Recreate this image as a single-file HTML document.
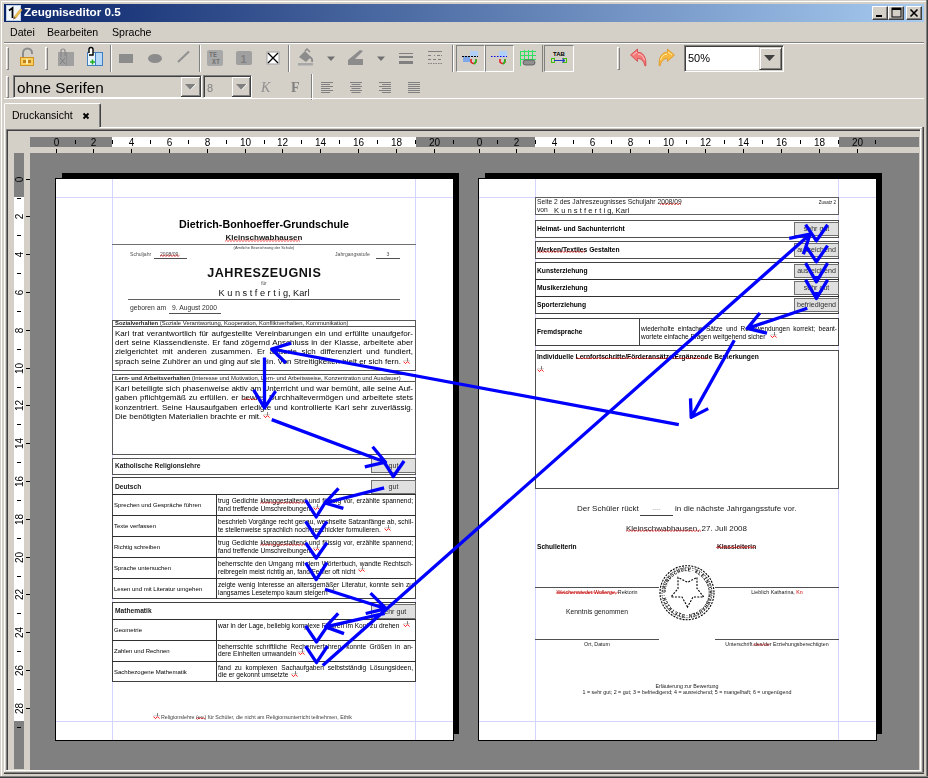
<!DOCTYPE html><html><head><meta charset="utf-8"><style>
html,body{margin:0;padding:0;}
body{width:928px;height:778px;overflow:hidden;position:relative;background:#d4d0c8;font-family:"Liberation Sans",sans-serif;}
div{position:absolute;box-sizing:border-box;}
.t{white-space:pre;will-change:transform;}
svg{position:absolute;}
</style></head><body>
<div style="left:0px;top:0px;width:928px;height:1px;background:#d4d0c8"></div>
<div style="left:1px;top:1px;width:926px;height:1px;background:#fff"></div>
<div style="left:1px;top:1px;width:1px;height:776px;background:#fff"></div>
<div style="left:926px;top:0px;width:1px;height:778px;background:#808080"></div>
<div style="left:927px;top:0px;width:1px;height:778px;background:#404040"></div>
<div style="left:0px;top:776px;width:928px;height:1px;background:#808080"></div>
<div style="left:0px;top:777px;width:928px;height:1px;background:#404040"></div>
<div style="left:4px;top:4px;width:920px;height:18px;background:linear-gradient(to right,#0a246a,#a6caf0)"></div>
<svg style="left:6px;top:5px" width="17" height="17" viewBox="0 0 17 17">
<rect x="0.5" y="0.5" width="14" height="15" fill="#f0f6fc" stroke="#c0d0e8" stroke-width="1"/>
<path d="M3 5.5 L6.5 3 V13" stroke="#000" stroke-width="1.8" fill="none"/>
<path d="M8 12 L14 4.5 Q15.5 3.5 16 5 L10 13 Z" fill="#f0c050" stroke="#d09830" stroke-width="0.6"/>
<path d="M7 14.5 L8 12 L10 13 Z" fill="#6a4010"/>
</svg>
<div class="t" style="left:24px;top:6.00px;font-size:11.7px;line-height:11.7px;color:#fff;font-weight:bold;">Zeugniseditor 0.5</div>
<div style="left:872px;top:6px;width:16px;height:14px;background:#d4d0c8;border-top:1px solid #fff;border-left:1px solid #fff;border-right:1px solid #404040;border-bottom:1px solid #404040;box-shadow:inset -1px -1px 0 #808080"></div>
<div style="left:888px;top:6px;width:16px;height:14px;background:#d4d0c8;border-top:1px solid #fff;border-left:1px solid #fff;border-right:1px solid #404040;border-bottom:1px solid #404040;box-shadow:inset -1px -1px 0 #808080"></div>
<div style="left:906px;top:6px;width:16px;height:14px;background:#d4d0c8;border-top:1px solid #fff;border-left:1px solid #fff;border-right:1px solid #404040;border-bottom:1px solid #404040;box-shadow:inset -1px -1px 0 #808080"></div>
<svg style="left:872px;top:6px" width="50" height="14" viewBox="0 0 50 14">
<rect x="4" y="9" width="6" height="2" fill="#000"/>
<rect x="20" y="2" width="9" height="9" fill="none" stroke="#000" stroke-width="1"/>
<rect x="20" y="2" width="9" height="2" fill="#000"/>
<path d="M38.5 3.5 L45.5 10.5 M45.5 3.5 L38.5 10.5" stroke="#000" stroke-width="1.6"/>
</svg>
<div class="t" style="left:10px;top:27.00px;font-size:10.6px;line-height:10.6px;color:#000">Datei</div>
<div class="t" style="left:46.5px;top:27.00px;font-size:10.6px;line-height:10.6px;color:#000">Bearbeiten</div>
<div class="t" style="left:112px;top:27.00px;font-size:10.6px;line-height:10.6px;color:#000">Sprache</div>
<div style="left:4px;top:42px;width:920px;height:1px;background:#808080"></div>
<div style="left:4px;top:43px;width:920px;height:1px;background:#fff"></div>
<div style="left:6px;top:47px;width:3px;height:23px;background:#d4d0c8;border-left:1px solid #fff;border-top:1px solid #fff;border-right:1px solid #808080;border-bottom:1px solid #808080"></div>
<div style="left:45px;top:47px;width:3px;height:23px;background:#d4d0c8;border-left:1px solid #fff;border-top:1px solid #fff;border-right:1px solid #808080;border-bottom:1px solid #808080"></div>
<div style="left:617px;top:47px;width:3px;height:23px;background:#d4d0c8;border-left:1px solid #fff;border-top:1px solid #fff;border-right:1px solid #808080;border-bottom:1px solid #808080"></div>
<div style="left:110px;top:45px;width:1px;height:27px;background:#808080"></div>
<div style="left:111px;top:45px;width:1px;height:27px;background:#fff"></div>
<div style="left:199px;top:45px;width:1px;height:27px;background:#808080"></div>
<div style="left:200px;top:45px;width:1px;height:27px;background:#fff"></div>
<div style="left:288px;top:45px;width:1px;height:27px;background:#808080"></div>
<div style="left:289px;top:45px;width:1px;height:27px;background:#fff"></div>
<div style="left:452px;top:45px;width:1px;height:27px;background:#808080"></div>
<div style="left:453px;top:45px;width:1px;height:27px;background:#fff"></div>
<svg style="left:0;top:44px" width="928" height="30" viewBox="0 44 928 30">
<!-- lock -->
<path d="M23 57 V53 A4.5 4.5 0 0 1 32 53 V54" stroke="#8c8c8c" stroke-width="2" fill="none"/>
<rect x="20.5" y="57.5" width="13" height="8" fill="#f8d060" stroke="#d09020"/>
<rect x="23" y="60" width="8" height="3" fill="#c08020"/>
<rect x="26" y="59" width="2" height="5" fill="#fff0b0"/>
<!-- clip gray -->
<rect x="58" y="52" width="16" height="14" fill="#a0a0a0"/>
<rect x="66" y="52" width="1" height="14" fill="#909090"/>
<path d="M60 58 L65 64 M65 58 L60 64" stroke="#808080" stroke-width="1"/>
<path d="M61 57 V51 A2 2 0 0 1 65 51 V56" stroke="#888" stroke-width="1.2" fill="none"/>
<!-- clip blue -->
<rect x="87.5" y="52.5" width="15" height="13" fill="#e8f4ff" stroke="#4080c0"/>
<rect x="95" y="53" width="1" height="12" fill="#4080c0"/>
<rect x="96" y="53" width="6" height="12" fill="#b8d8f8"/>
<path d="M89 53 V49.5 A2 2 0 0 1 93 49.5 V55 H89" stroke="#000" stroke-width="1.4" fill="#fff"/>
<path d="M90 62 H95 M92.5 59.5 V64.5" stroke="#20b020" stroke-width="1.6"/>
<!-- rect -->
<rect x="119" y="54" width="14" height="9" fill="#8c8c8c"/>
<ellipse cx="155" cy="58.5" rx="7" ry="4.5" fill="#8c8c8c"/>
<path d="M178 62 L189 51.5" stroke="#909090" stroke-width="2"/>
<!-- TEXT -->
<rect x="207" y="50" width="16" height="16" rx="2" fill="#a8a8a8"/>
<text x="209" y="57" font-family="Liberation Mono" font-size="6.5" font-weight="bold" fill="#707070">TE</text>
<text x="212" y="64" font-family="Liberation Mono" font-size="6.5" font-weight="bold" fill="#707070">XT</text>
<!-- 1 -->
<rect x="236" y="51" width="16" height="14" rx="2" fill="#a0a0a0"/>
<text x="240.5" y="63" font-family="Liberation Sans" font-size="11" font-weight="bold" fill="#808080">1</text>
<!-- X box -->
<rect x="267" y="52" width="12" height="12" fill="#fff" stroke="#a0a0a0"/>
<path d="M268 53 L278 63 M278 53 L268 63" stroke="#000" stroke-width="1.3"/>
<!-- bucket -->
<path d="M299 57 L305 51 L311 57 L306 62 Z" fill="#8c8c8c"/>
<path d="M305 51 L307 49 L310 52" stroke="#8c8c8c" stroke-width="1.5" fill="none"/>
<path d="M310 57 Q313 59 312 62" stroke="#8c8c8c" stroke-width="1.8" fill="none"/>
<rect x="298" y="63" width="15" height="2.5" fill="#a8a8a8"/>
<path d="M327 56.5 H335 L331 61 Z" fill="#707070"/>
<!-- pen -->
<path d="M348 60 L360 50 L363 51 L355 59 H363 V65 H348 Z" fill="#8c8c8c"/>
<path d="M377 56.5 H385 L381 61 Z" fill="#707070"/>
<!-- line thickness -->
<rect x="399" y="53" width="14" height="1" fill="#808080"/>
<rect x="399" y="56" width="14" height="2" fill="#808080"/>
<rect x="399" y="61" width="14" height="3" fill="#808080"/>
<!-- line style -->
<rect x="428" y="51" width="14" height="1" fill="#808080"/>
<path d="M428 55.5 H431 M434 55.5 H435 M437 55.5 H440 M441 55.5 H442" stroke="#808080"/>
<path d="M428 59.5 H431 M433 59.5 H436 M438 59.5 H441" stroke="#808080"/>
<path d="M428 63.5 H442" stroke="#808080" stroke-dasharray="1.5 1"/>
</svg>
<div style="left:456px;top:45px;width:29px;height:27px;background:#d4d0c8;border-top:1px solid #808080;border-left:1px solid #808080;border-right:1px solid #fff;border-bottom:1px solid #fff"></div>
<div style="left:485px;top:45px;width:29px;height:27px;background:#d4d0c8;border-top:1px solid #808080;border-left:1px solid #808080;border-right:1px solid #fff;border-bottom:1px solid #fff"></div>
<div style="left:544px;top:45px;width:30px;height:27px;background:#d4d0c8;border-top:1px solid #808080;border-left:1px solid #808080;border-right:1px solid #fff;border-bottom:1px solid #fff"></div>
<div style="left:542px;top:45px;width:1px;height:27px;background:#808080"></div>
<svg style="left:0;top:44px" width="928" height="30" viewBox="0 44 928 30">
<!-- magnet 1 -->
<rect x="470" y="51" width="8" height="6" fill="#b0d0f8"/>
<rect x="463" y="56" width="7" height="6" fill="#80a8e8"/>
<path d="M462 56.5 H478" stroke="#000" stroke-dasharray="2 1"/>
<path d="M471 59 V62 Q473.5 65 476 62 V59" stroke="#e02020" stroke-width="1.6" fill="none"/>
<path d="M474 64 Q476 63 476 59" stroke="#20c020" stroke-width="1.6" fill="none"/>
<!-- magnet 2 -->
<rect x="499" y="51" width="8" height="6" fill="#b0d0f8"/>
<path d="M491 56.5 H507" stroke="#0000e0" stroke-dasharray="1.5 1.5"/>
<path d="M500 59 V62 Q502.5 65 505 62 V59" stroke="#e02020" stroke-width="1.6" fill="none"/>
<path d="M503 64 Q505 63 505 59" stroke="#20c020" stroke-width="1.6" fill="none"/>
<!-- grid -->
<path d="M520.5 51 V66 M524.5 50 V64 M528.5 50 V62 M532.5 50 V62 M520 51.5 H536 M520 55.5 H536 M520 59.5 H536" stroke="#30e060" stroke-width="1"/>
<rect x="523" y="60" width="12" height="5" rx="2.5" fill="#909090" stroke="#505050" stroke-width="0.8"/>
<!-- TAB -->
<text x="553" y="56" font-family="Liberation Sans" font-size="6" font-weight="bold" fill="#000">TAB</text>
<rect x="551.5" y="58.5" width="3" height="4" fill="none" stroke="#40c000"/>
<rect x="563.5" y="58.5" width="3" height="4" fill="none" stroke="#40c000"/>
<path d="M554 60.5 H564" stroke="#2040c0" stroke-width="1"/>
<path d="M562 58.5 L565 60.5 L562 62.5" stroke="#2040c0" fill="none"/>
<!-- undo -->
<path d="M630.5 55 L637.5 49 V52 Q646.5 52.5 646 65.5 L645 66 Q643 58 637.5 58.5 V61.5 Z" fill="#f47a7a" stroke="#d03838" stroke-width="0.7"/>
<path d="M633 55 L637 52 M638 54 Q643 54.5 644.5 60" stroke="#ffd0d0" stroke-width="0.9" fill="none"/>
<!-- redo -->
<path d="M674.5 55 L667.5 49 V52 Q658.5 52.5 659 65.5 L660 66 Q662 58 667.5 58.5 V61.5 Z" fill="#f8b840" stroke="#d89020" stroke-width="0.7"/>
<path d="M672 55 L668 52 M667 54 Q662 54.5 660.5 60" stroke="#fff0b0" stroke-width="0.9" fill="none"/>
</svg>
<div style="left:684px;top:45px;width:100px;height:27px;background:#fff;border-top:1px solid #808080;border-left:1px solid #808080;border-right:1px solid #fff;border-bottom:1px solid #fff;box-shadow:inset 1px 1px 0 #404040, inset -1px -1px 0 #d4d0c8"></div>
<div style="left:759px;top:47px;width:23px;height:23px;background:#d4d0c8;border-top:1px solid #d4d0c8;border-left:1px solid #d4d0c8;border-right:1px solid #404040;border-bottom:1px solid #404040;box-shadow:inset 1px 1px 0 #fff, inset -1px -1px 0 #808080"></div>
<svg style="left:759px;top:47px" width="23" height="23"><path d="M5 8 H16 L10.5 14 Z" fill="#404040"/></svg>
<div class="t" style="left:687.5px;top:53.00px;font-size:11px;line-height:11px;color:#000">50%</div>
<div style="left:6px;top:76px;width:3px;height:22px;background:#d4d0c8;border-left:1px solid #fff;border-top:1px solid #fff;border-right:1px solid #808080;border-bottom:1px solid #808080"></div>
<div style="left:13px;top:75px;width:189px;height:23px;background:#d4d0c8;border-top:1px solid #808080;border-left:1px solid #808080;border-right:1px solid #fff;border-bottom:1px solid #fff;box-shadow:inset 1px 1px 0 #404040, inset -1px -1px 0 #d4d0c8"></div>
<div style="left:181px;top:77px;width:20px;height:20px;background:#d4d0c8;border-right:1px solid #404040;border-bottom:1px solid #404040;box-shadow:inset 1px 1px 0 #fff, inset -1px -1px 0 #808080"></div>
<svg style="left:181px;top:77px" width="20" height="20"><path d="M4 7 H15 L9.5 13 Z" fill="#808080"/><path d="M15 7 L9.5 13" stroke="#fff" stroke-width="1"/></svg>
<div class="t" style="left:17px;top:80.00px;font-size:15.3px;line-height:15.3px;color:#000">ohne Serifen</div>
<div style="left:203px;top:75px;width:49px;height:23px;background:#d4d0c8;border-top:1px solid #808080;border-left:1px solid #808080;border-right:1px solid #fff;border-bottom:1px solid #fff;box-shadow:inset 1px 1px 0 #404040, inset -1px -1px 0 #d4d0c8"></div>
<div style="left:232px;top:77px;width:19px;height:20px;background:#d4d0c8;border-right:1px solid #404040;border-bottom:1px solid #404040;box-shadow:inset 1px 1px 0 #fff, inset -1px -1px 0 #808080"></div>
<svg style="left:232px;top:77px" width="19" height="20"><path d="M4 7 H15 L9.5 13 Z" fill="#808080"/><path d="M15 7 L9.5 13" stroke="#fff" stroke-width="1"/></svg>
<div class="t" style="left:206.5px;top:83.00px;font-size:11px;line-height:11px;color:#808080">8</div>
<div class="t" style="left:261px;top:81.00px;font-size:14px;line-height:14px;color:#909090;font-family:'Liberation Serif';font-style:italic">K</div>
<div class="t" style="left:290.5px;top:81.00px;font-size:14px;line-height:14px;color:#808080;font-family:'Liberation Serif';font-weight:bold">F</div>
<div style="left:311px;top:74px;width:1px;height:26px;background:#808080"></div>
<div style="left:312px;top:74px;width:1px;height:26px;background:#fff"></div>
<svg style="left:0;top:78px" width="928" height="20" viewBox="0 78 928 20">
<g fill="#808080">
<rect x="321" y="82" width="12" height="1"/><rect x="321" y="84" width="9" height="1"/><rect x="321" y="86" width="12" height="1"/><rect x="321" y="88" width="9" height="1"/><rect x="321" y="90" width="12" height="1"/><rect x="321" y="92" width="9" height="1"/>
<rect x="350" y="82" width="12" height="1"/><rect x="351.5" y="84" width="9" height="1"/><rect x="350" y="86" width="12" height="1"/><rect x="351.5" y="88" width="9" height="1"/><rect x="350" y="90" width="12" height="1"/><rect x="351.5" y="92" width="9" height="1"/>
<rect x="379" y="82" width="12" height="1"/><rect x="382" y="84" width="9" height="1"/><rect x="379" y="86" width="12" height="1"/><rect x="382" y="88" width="9" height="1"/><rect x="379" y="90" width="12" height="1"/><rect x="382" y="92" width="9" height="1"/>
<rect x="408" y="82" width="12" height="1"/><rect x="408" y="84" width="12" height="1"/><rect x="408" y="86" width="12" height="1"/><rect x="408" y="88" width="12" height="1"/><rect x="408" y="90" width="12" height="1"/><rect x="408" y="92" width="12" height="1"/>
</g></svg>
<div style="left:4px;top:98px;width:920px;height:1px;background:#fff"></div>
<div style="left:4px;top:103px;width:97px;height:24px;background:#d4d0c8;border-top:1px solid #fff;border-left:1px solid #fff;border-right:1px solid #404040;box-shadow:inset -1px 0 0 #808080;border-top-left-radius:2px;border-top-right-radius:2px"></div>
<div class="t" style="left:11.5px;top:110.00px;font-size:10.5px;line-height:10.5px;color:#000">Druckansicht</div>
<svg style="left:82px;top:112px" width="9" height="8"><path d="M1.5 1.5 L6.5 6.5 M6.5 1.5 L1.5 6.5" stroke="#000" stroke-width="1.8"/></svg>
<div style="left:100px;top:127px;width:824px;height:1px;background:#fff"></div>
<div style="left:4px;top:127px;width:1px;height:647px;background:#fff"></div>
<div style="left:922px;top:127px;width:1px;height:647px;background:#808080"></div>
<div style="left:923px;top:127px;width:1px;height:647px;background:#404040"></div>
<div style="left:4px;top:772px;width:920px;height:1px;background:#808080"></div>
<div style="left:4px;top:773px;width:920px;height:1px;background:#404040"></div>
<div style="left:6px;top:129px;width:915px;height:1px;background:#808080"></div>
<div style="left:6px;top:129px;width:1px;height:642px;background:#808080"></div>
<div style="left:7px;top:130px;width:913px;height:1px;background:#404040"></div>
<div style="left:7px;top:130px;width:1px;height:640px;background:#404040"></div>
<div style="left:6px;top:770px;width:915px;height:1px;background:#fff"></div>
<div style="left:920px;top:129px;width:1px;height:642px;background:#fff"></div>
<div style="left:30px;top:137px;width:889px;height:10px;background:#808080"></div>
<div style="left:112px;top:137px;width:304px;height:10px;background:#fff"></div>
<div style="left:535px;top:137px;width:304px;height:10px;background:#fff"></div>
<div style="left:14px;top:153px;width:10px;height:616px;background:#808080"></div>
<div style="left:14px;top:197px;width:10px;height:524px;background:#fff"></div>
<div style="left:30px;top:153px;width:889px;height:617px;background:#808080"></div>
<svg style="left:0;top:0" width="928" height="778" viewBox="0 0 928 778"><rect x="56" y="149" width="1" height="4" fill="#000"/><text x="56.5" y="146" font-family="Liberation Sans" font-size="10" text-anchor="middle" fill="#000">0</text><rect x="75" y="140" width="1" height="4" fill="#000"/><rect x="93" y="149" width="1" height="4" fill="#000"/><text x="93.5" y="146" font-family="Liberation Sans" font-size="10" text-anchor="middle" fill="#000">2</text><rect x="112" y="140" width="1" height="4" fill="#000"/><rect x="131" y="149" width="1" height="4" fill="#000"/><text x="131.5" y="146" font-family="Liberation Sans" font-size="10" text-anchor="middle" fill="#000">4</text><rect x="150" y="140" width="1" height="4" fill="#000"/><rect x="169" y="149" width="1" height="4" fill="#000"/><text x="169.5" y="146" font-family="Liberation Sans" font-size="10" text-anchor="middle" fill="#000">6</text><rect x="188" y="140" width="1" height="4" fill="#000"/><rect x="207" y="149" width="1" height="4" fill="#000"/><text x="207.5" y="146" font-family="Liberation Sans" font-size="10" text-anchor="middle" fill="#000">8</text><rect x="226" y="140" width="1" height="4" fill="#000"/><rect x="245" y="149" width="1" height="4" fill="#000"/><text x="245.5" y="146" font-family="Liberation Sans" font-size="10" text-anchor="middle" fill="#000">10</text><rect x="264" y="140" width="1" height="4" fill="#000"/><rect x="282" y="149" width="1" height="4" fill="#000"/><text x="282.5" y="146" font-family="Liberation Sans" font-size="10" text-anchor="middle" fill="#000">12</text><rect x="301" y="140" width="1" height="4" fill="#000"/><rect x="320" y="149" width="1" height="4" fill="#000"/><text x="320.5" y="146" font-family="Liberation Sans" font-size="10" text-anchor="middle" fill="#000">14</text><rect x="339" y="140" width="1" height="4" fill="#000"/><rect x="358" y="149" width="1" height="4" fill="#000"/><text x="358.5" y="146" font-family="Liberation Sans" font-size="10" text-anchor="middle" fill="#000">16</text><rect x="377" y="140" width="1" height="4" fill="#000"/><rect x="396" y="149" width="1" height="4" fill="#000"/><text x="396.5" y="146" font-family="Liberation Sans" font-size="10" text-anchor="middle" fill="#000">18</text><rect x="415" y="140" width="1" height="4" fill="#000"/><rect x="434" y="149" width="1" height="4" fill="#000"/><text x="434.5" y="146" font-family="Liberation Sans" font-size="10" text-anchor="middle" fill="#000">20</text><rect x="453" y="140" width="1" height="4" fill="#000"/><rect x="479" y="149" width="1" height="4" fill="#000"/><text x="479.5" y="146" font-family="Liberation Sans" font-size="10" text-anchor="middle" fill="#000">0</text><rect x="497" y="140" width="1" height="4" fill="#000"/><rect x="516" y="149" width="1" height="4" fill="#000"/><text x="516.5" y="146" font-family="Liberation Sans" font-size="10" text-anchor="middle" fill="#000">2</text><rect x="535" y="140" width="1" height="4" fill="#000"/><rect x="554" y="149" width="1" height="4" fill="#000"/><text x="554.5" y="146" font-family="Liberation Sans" font-size="10" text-anchor="middle" fill="#000">4</text><rect x="573" y="140" width="1" height="4" fill="#000"/><rect x="592" y="149" width="1" height="4" fill="#000"/><text x="592.5" y="146" font-family="Liberation Sans" font-size="10" text-anchor="middle" fill="#000">6</text><rect x="611" y="140" width="1" height="4" fill="#000"/><rect x="630" y="149" width="1" height="4" fill="#000"/><text x="630.5" y="146" font-family="Liberation Sans" font-size="10" text-anchor="middle" fill="#000">8</text><rect x="649" y="140" width="1" height="4" fill="#000"/><rect x="668" y="149" width="1" height="4" fill="#000"/><text x="668.5" y="146" font-family="Liberation Sans" font-size="10" text-anchor="middle" fill="#000">10</text><rect x="686" y="140" width="1" height="4" fill="#000"/><rect x="705" y="149" width="1" height="4" fill="#000"/><text x="705.5" y="146" font-family="Liberation Sans" font-size="10" text-anchor="middle" fill="#000">12</text><rect x="724" y="140" width="1" height="4" fill="#000"/><rect x="743" y="149" width="1" height="4" fill="#000"/><text x="743.5" y="146" font-family="Liberation Sans" font-size="10" text-anchor="middle" fill="#000">14</text><rect x="762" y="140" width="1" height="4" fill="#000"/><rect x="781" y="149" width="1" height="4" fill="#000"/><text x="781.5" y="146" font-family="Liberation Sans" font-size="10" text-anchor="middle" fill="#000">16</text><rect x="800" y="140" width="1" height="4" fill="#000"/><rect x="819" y="149" width="1" height="4" fill="#000"/><text x="819.5" y="146" font-family="Liberation Sans" font-size="10" text-anchor="middle" fill="#000">18</text><rect x="838" y="140" width="1" height="4" fill="#000"/><rect x="857" y="149" width="1" height="4" fill="#000"/><text x="857.5" y="146" font-family="Liberation Sans" font-size="10" text-anchor="middle" fill="#000">20</text><rect x="875" y="140" width="1" height="4" fill="#000"/><rect x="26" y="179" width="4" height="1" fill="#000"/><text transform="translate(23.2,179.5) rotate(-90)" font-family="Liberation Sans" font-size="10" text-anchor="middle" fill="#000">0</text><rect x="17" y="198" width="4" height="1" fill="#000"/><rect x="26" y="216" width="4" height="1" fill="#000"/><text transform="translate(23.2,216.5) rotate(-90)" font-family="Liberation Sans" font-size="10" text-anchor="middle" fill="#000">2</text><rect x="17" y="235" width="4" height="1" fill="#000"/><rect x="26" y="254" width="4" height="1" fill="#000"/><text transform="translate(23.2,254.5) rotate(-90)" font-family="Liberation Sans" font-size="10" text-anchor="middle" fill="#000">4</text><rect x="17" y="273" width="4" height="1" fill="#000"/><rect x="26" y="292" width="4" height="1" fill="#000"/><text transform="translate(23.2,292.5) rotate(-90)" font-family="Liberation Sans" font-size="10" text-anchor="middle" fill="#000">6</text><rect x="17" y="311" width="4" height="1" fill="#000"/><rect x="26" y="330" width="4" height="1" fill="#000"/><text transform="translate(23.2,330.5) rotate(-90)" font-family="Liberation Sans" font-size="10" text-anchor="middle" fill="#000">8</text><rect x="17" y="349" width="4" height="1" fill="#000"/><rect x="26" y="368" width="4" height="1" fill="#000"/><text transform="translate(23.2,368.5) rotate(-90)" font-family="Liberation Sans" font-size="10" text-anchor="middle" fill="#000">10</text><rect x="17" y="387" width="4" height="1" fill="#000"/><rect x="26" y="405" width="4" height="1" fill="#000"/><text transform="translate(23.2,405.5) rotate(-90)" font-family="Liberation Sans" font-size="10" text-anchor="middle" fill="#000">12</text><rect x="17" y="424" width="4" height="1" fill="#000"/><rect x="26" y="443" width="4" height="1" fill="#000"/><text transform="translate(23.2,443.5) rotate(-90)" font-family="Liberation Sans" font-size="10" text-anchor="middle" fill="#000">14</text><rect x="17" y="462" width="4" height="1" fill="#000"/><rect x="26" y="481" width="4" height="1" fill="#000"/><text transform="translate(23.2,481.5) rotate(-90)" font-family="Liberation Sans" font-size="10" text-anchor="middle" fill="#000">16</text><rect x="17" y="500" width="4" height="1" fill="#000"/><rect x="26" y="519" width="4" height="1" fill="#000"/><text transform="translate(23.2,519.5) rotate(-90)" font-family="Liberation Sans" font-size="10" text-anchor="middle" fill="#000">18</text><rect x="17" y="538" width="4" height="1" fill="#000"/><rect x="26" y="557" width="4" height="1" fill="#000"/><text transform="translate(23.2,557.5) rotate(-90)" font-family="Liberation Sans" font-size="10" text-anchor="middle" fill="#000">20</text><rect x="17" y="576" width="4" height="1" fill="#000"/><rect x="26" y="594" width="4" height="1" fill="#000"/><text transform="translate(23.2,594.5) rotate(-90)" font-family="Liberation Sans" font-size="10" text-anchor="middle" fill="#000">22</text><rect x="17" y="613" width="4" height="1" fill="#000"/><rect x="26" y="632" width="4" height="1" fill="#000"/><text transform="translate(23.2,632.5) rotate(-90)" font-family="Liberation Sans" font-size="10" text-anchor="middle" fill="#000">24</text><rect x="17" y="651" width="4" height="1" fill="#000"/><rect x="26" y="670" width="4" height="1" fill="#000"/><text transform="translate(23.2,670.5) rotate(-90)" font-family="Liberation Sans" font-size="10" text-anchor="middle" fill="#000">26</text><rect x="17" y="689" width="4" height="1" fill="#000"/><rect x="26" y="708" width="4" height="1" fill="#000"/><text transform="translate(23.2,708.5) rotate(-90)" font-family="Liberation Sans" font-size="10" text-anchor="middle" fill="#000">28</text><rect x="17" y="727" width="4" height="1" fill="#000"/></svg>
<div style="left:62px;top:173px;width:397px;height:5px;background:#000"></div>
<div style="left:454px;top:173px;width:5px;height:561px;background:#000"></div>
<div style="left:55px;top:178px;width:399px;height:563px;background:#fff;border:1px solid #000"></div>
<div style="left:112px;top:179px;width:1px;height:561px;background:#d4d4ff"></div>
<div style="left:415px;top:179px;width:1px;height:561px;background:#d4d4ff"></div>
<div style="left:56px;top:197px;width:397px;height:1px;background:#d4d4ff"></div>
<div style="left:56px;top:721px;width:397px;height:1px;background:#d4d4ff"></div>
<div style="left:485px;top:173px;width:397px;height:5px;background:#000"></div>
<div style="left:877px;top:173px;width:5px;height:561px;background:#000"></div>
<div style="left:478px;top:178px;width:399px;height:563px;background:#fff;border:1px solid #000"></div>
<div style="left:535px;top:179px;width:1px;height:561px;background:#d4d4ff"></div>
<div style="left:838px;top:179px;width:1px;height:561px;background:#d4d4ff"></div>
<div style="left:479px;top:197px;width:397px;height:1px;background:#d4d4ff"></div>
<div style="left:479px;top:721px;width:397px;height:1px;background:#d4d4ff"></div>
<div class="t" style="left:112px;top:219.00px;font-size:10.7px;line-height:10.7px;width:304px;text-align:center;color:#000;font-weight:bold;">Dietrich-Bonhoeffer-Grundschule</div>
<div class="t" style="left:112px;top:234.00px;font-size:8px;line-height:8px;width:304px;text-align:center;color:#202020;font-weight:bold;">Kleinschwabhausen</div>
<svg style="left:0;top:0" width="928" height="778"><path d="M225 241.5 l1.5 -1.4 l1.5 1.4 l1.5 -1.4 l1.5 1.4 l1.5 -1.4 l1.5 1.4 l1.5 -1.4 l1.5 1.4 l1.5 -1.4 l1.5 1.4 l1.5 -1.4 l1.5 1.4 l1.5 -1.4 l1.5 1.4 l1.5 -1.4 l1.5 1.4 l1.5 -1.4 l1.5 1.4 l1.5 -1.4 l1.5 1.4 l1.5 -1.4 l1.5 1.4 l1.5 -1.4 l1.5 1.4 l1.5 -1.4 l1.5 1.4 l1.5 -1.4 l1.5 1.4 l1.5 -1.4 l1.5 1.4 l1.5 -1.4 l1.5 1.4 l1.5 -1.4 l1.5 1.4 l1.5 -1.4 l1.5 1.4 l1.5 -1.4 l1.5 1.4 l1.5 -1.4 l1.5 1.4 l1.5 -1.4 l1.5 1.4 l1.5 -1.4 l1.5 1.4 l1.5 -1.4 l1.5 1.4 l1.5 -1.4 l1.5 1.4 l1.5 -1.4 l1.5 1.4" stroke="#e00000" stroke-width="0.7" fill="none"/></svg>
<div style="left:112px;top:244px;width:304px;height:1px;background:#707070"></div>
<div class="t" style="left:112px;top:246.00px;font-size:3.9px;line-height:3.9px;width:304px;text-align:center;color:#404040;">(Amtliche Bezeichnung der Schule)</div>
<div class="t" style="left:130px;top:252.00px;font-size:5.1px;line-height:5.1px;color:#505050;">Schuljahr</div>
<div class="t" style="left:160px;top:252.00px;font-size:5.1px;line-height:5.1px;color:#505050;">2008/09</div>
<svg style="left:0;top:0" width="928" height="778"><path d="M160 256.5 l1.5 -1.4 l1.5 1.4 l1.5 -1.4 l1.5 1.4 l1.5 -1.4 l1.5 1.4 l1.5 -1.4 l1.5 1.4 l1.5 -1.4 l1.5 1.4 l1.5 -1.4 l1.5 1.4 l1.5 -1.4" stroke="#e00000" stroke-width="0.7" fill="none"/></svg>
<div style="left:154px;top:258px;width:33px;height:1px;background:#505050"></div>
<div class="t" style="left:335px;top:252.00px;font-size:5.1px;line-height:5.1px;color:#505050;">Jahrgangsstufe</div>
<div class="t" style="left:376px;top:252.00px;font-size:5.1px;line-height:5.1px;width:24px;text-align:center;color:#505050;">3</div>
<div style="left:376px;top:258px;width:24px;height:1px;background:#505050"></div>
<div class="t" style="left:112px;top:267.00px;font-size:12.6px;line-height:12.6px;width:304.55px;text-align:center;color:#101010;font-weight:bold;letter-spacing:0.55px;">JAHRESZEUGNIS</div>
<div class="t" style="left:112px;top:282.00px;font-size:4.5px;line-height:4.5px;width:304px;text-align:center;color:#404040;">für</div>
<div class="t" style="left:112px;top:289.00px;font-size:9.2px;line-height:9.2px;width:304px;text-align:center;color:#101010;">K u n s t f e r t i g, Karl</div>
<div style="left:128px;top:299px;width:272px;height:1px;background:#606060"></div>
<div class="t" style="left:130px;top:305.00px;font-size:6.75px;line-height:6.75px;color:#303030;">geboren am</div>
<div class="t" style="left:172px;top:305.00px;font-size:6.75px;line-height:6.75px;color:#303030;">9. August 2000</div>
<div style="left:169px;top:313px;width:52px;height:1px;background:#505050"></div>
<div style="left:112px;top:320px;width:304px;height:51px;border:1px solid #585858"></div>
<div style="left:112px;top:326px;width:304px;height:1px;background:#585858"></div>
<div class="t" style="left:115px;top:321.00px;font-size:5.9px;line-height:5.9px;color:#202020;"><b>Sozialverhalten</b> (Soziale Verantwortung, Kooperation, Konfliktverhalten, Kommunikation)</div>
<div class="t" style="left:115px;top:330.00px;font-size:8.0px;line-height:8.0px;width:298px;text-align:justify;text-align-last:justify;white-space:nowrap;color:#000;">Karl trat verantwortlich für aufgestellte Vereinbarungen ein und erfüllte unaufgefor-</div>
<div class="t" style="left:115px;top:339.00px;font-size:8.0px;line-height:8.0px;width:298px;text-align:justify;text-align-last:justify;white-space:nowrap;color:#000;">dert seine Klassendienste. Er fand zögernd Anschluss in der Klasse, arbeitete aber</div>
<div class="t" style="left:115px;top:348.00px;font-size:8.0px;line-height:8.0px;width:298px;text-align:justify;text-align-last:justify;white-space:nowrap;color:#000;">zielgerichtet mit anderen zusammen. Er äußerte sich differenziert und fundiert,</div>
<div class="t" style="left:115px;top:358.00px;font-size:8.0px;line-height:8.0px;color:#000;">sprach seine Zuhörer an und ging auf sie ein. Von Streitigkeiten hielt er sich fern.</div>
<svg style="left:402.7px;top:358px" width="8" height="8"><path d="M0.5 2.8 H7" stroke="#b8c0c0" stroke-width="0.8"/><path d="M4.5 0 V3" stroke="#606060" stroke-width="0.8"/><path d="M0.5 3.6 L2.5 5.6 L4.5 3.6 L6.5 5.6" stroke="#ff0000" stroke-width="0.9" fill="none"/></svg>
<div style="left:112px;top:374px;width:304px;height:81px;border:1px solid #585858"></div>
<div style="left:112px;top:381px;width:304px;height:1px;background:#585858"></div>
<div class="t" style="left:115px;top:376.00px;font-size:5.9px;line-height:5.9px;color:#202020;"><b>Lern- und Arbeitsverhalten</b> (Interesse und Motivation, Lern- und Arbeitsweise, Konzentration und Ausdauer)</div>
<div class="t" style="left:115px;top:385.00px;font-size:8.0px;line-height:8.0px;width:298px;text-align:justify;text-align-last:justify;white-space:nowrap;color:#000;">Karl beteiligte sich phasenweise aktiv am Unterricht und war bemüht, alle seine Auf-</div>
<div class="t" style="left:115px;top:394.00px;font-size:8.0px;line-height:8.0px;width:298px;text-align:justify;text-align-last:justify;white-space:nowrap;color:#000;">gaben pflichtgemäß zu erfüllen. er bewies Durchhaltevermögen und arbeitete stets</div>
<div class="t" style="left:115px;top:404.00px;font-size:8.0px;line-height:8.0px;width:298px;text-align:justify;text-align-last:justify;white-space:nowrap;color:#000;">konzentriert. Seine Hausaufgaben erledigte und kontrollierte Karl sehr zuverlässig.</div>
<div class="t" style="left:115px;top:413.00px;font-size:8.0px;line-height:8.0px;color:#000;">Die benötigten Materialien brachte er mit.</div>
<svg style="left:0;top:0" width="928" height="778"><path d="M243 400 l1.5 -1.4 l1.5 1.4 l1.5 -1.4 l1.5 1.4 l1.5 -1.4 l1.5 1.4 l1.5 -1.4 l1.5 1.4 l1.5 -1.4" stroke="#e00000" stroke-width="0.7" fill="none"/></svg>
<svg style="left:262.5px;top:412px" width="8" height="8"><path d="M0.5 2.8 H7" stroke="#b8c0c0" stroke-width="0.8"/><path d="M4.5 0 V3" stroke="#606060" stroke-width="0.8"/><path d="M0.5 3.6 L2.5 5.6 L4.5 3.6 L6.5 5.6" stroke="#ff0000" stroke-width="0.9" fill="none"/></svg>
<div style="left:112px;top:458px;width:304px;height:17px;border:1px solid #585858"></div>
<div class="t" style="left:114.5px;top:463.00px;font-size:6.66px;line-height:6.66px;color:#202020;font-weight:bold;">Katholische Religionslehre</div>
<div style="left:371px;top:458px;width:45px;height:15px;background:#e0e0e0;border:1px solid #707070"></div>
<div class="t" style="left:371px;top:463.00px;font-size:7.1px;line-height:7.1px;width:45px;text-align:center;color:#303030;">gut</div>
<div style="left:112px;top:477px;width:304px;height:122px;border:1px solid #404040"></div>
<div style="left:112px;top:494px;width:304px;height:1px;background:#303030"></div>
<div class="t" style="left:114.5px;top:484.00px;font-size:6.66px;line-height:6.66px;color:#202020;font-weight:bold;">Deutsch</div>
<div style="left:371px;top:480px;width:45px;height:14px;background:#e0e0e0;border:1px solid #707070"></div>
<div class="t" style="left:371px;top:484.00px;font-size:7.1px;line-height:7.1px;width:45px;text-align:center;color:#303030;">gut</div>
<div style="left:112px;top:515px;width:304px;height:1px;background:#303030"></div>
<div style="left:112px;top:536px;width:304px;height:1px;background:#303030"></div>
<div style="left:112px;top:557px;width:304px;height:1px;background:#303030"></div>
<div style="left:112px;top:578px;width:304px;height:1px;background:#303030"></div>
<div style="left:216px;top:494px;width:1px;height:105px;background:#303030"></div>
<div class="t" style="left:114px;top:502.00px;font-size:6.0px;line-height:6.0px;color:#000;">Sprechen und Gespräche führen</div>
<div class="t" style="left:218px;top:498.00px;font-size:6.6px;line-height:6.6px;width:195px;text-align:justify;text-align-last:justify;white-space:nowrap;color:#000;">trug Gedichte klanggestaltend und flüssig vor, erzählte spannend;</div>
<div class="t" style="left:218px;top:506.00px;font-size:6.6px;line-height:6.6px;color:#000;">fand treffende Umschreibungen</div>
<div class="t" style="left:114px;top:523.00px;font-size:6.0px;line-height:6.0px;color:#000;">Texte verfassen</div>
<div class="t" style="left:218px;top:519.00px;font-size:6.6px;line-height:6.6px;width:195px;text-align:justify;text-align-last:justify;white-space:nowrap;color:#000;">beschrieb Vorgänge recht genau, wechselte Satzanfänge ab, schil-</div>
<div class="t" style="left:218px;top:527.00px;font-size:6.6px;line-height:6.6px;color:#000;">te stellenweise sprachlich noch geschickter formulieren.</div>
<div class="t" style="left:114px;top:544.00px;font-size:6.0px;line-height:6.0px;color:#000;">Richtig schreiben</div>
<div class="t" style="left:218px;top:540.00px;font-size:6.6px;line-height:6.6px;width:195px;text-align:justify;text-align-last:justify;white-space:nowrap;color:#000;">trug Gedichte klanggestaltend und flüssig vor, erzählte spannend;</div>
<div class="t" style="left:218px;top:548.00px;font-size:6.6px;line-height:6.6px;color:#000;">fand treffende Umschreibungen</div>
<div class="t" style="left:114px;top:565.00px;font-size:6.0px;line-height:6.0px;color:#000;">Sprache untersuchen</div>
<div class="t" style="left:218px;top:561.00px;font-size:6.6px;line-height:6.6px;width:195px;text-align:justify;text-align-last:justify;white-space:nowrap;color:#000;">beherrschte den Umgang mit dem Wörterbuch, wandte Rechtsch-</div>
<div class="t" style="left:218px;top:569.00px;font-size:6.6px;line-height:6.6px;color:#000;">reibregeln meist richtig an, fand Fehler oft nicht</div>
<div class="t" style="left:114px;top:586.00px;font-size:6.0px;line-height:6.0px;color:#000;">Lesen und mit Literatur umgehen</div>
<div class="t" style="left:218px;top:582.00px;font-size:6.6px;line-height:6.6px;width:195px;text-align:justify;text-align-last:justify;white-space:nowrap;color:#000;">zeigte wenig Interesse an altersgemäßer Literatur, konnte sein zu</div>
<div class="t" style="left:218px;top:590.00px;font-size:6.6px;line-height:6.6px;color:#000;">langsames Lesetempo kaum steigern</div>
<svg style="left:0;top:0" width="928" height="778"><path d="M260 503.5 l1.5 -1.4 l1.5 1.4 l1.5 -1.4 l1.5 1.4 l1.5 -1.4 l1.5 1.4 l1.5 -1.4 l1.5 1.4 l1.5 -1.4 l1.5 1.4 l1.5 -1.4 l1.5 1.4 l1.5 -1.4 l1.5 1.4 l1.5 -1.4 l1.5 1.4 l1.5 -1.4 l1.5 1.4 l1.5 -1.4 l1.5 1.4 l1.5 -1.4 l1.5 1.4 l1.5 -1.4 l1.5 1.4 l1.5 -1.4 l1.5 1.4 l1.5 -1.4 l1.5 1.4 l1.5 -1.4 l1.5 1.4" stroke="#e00000" stroke-width="0.7" fill="none"/></svg>
<svg style="left:0;top:0" width="928" height="778"><path d="M260 545.5 l1.5 -1.4 l1.5 1.4 l1.5 -1.4 l1.5 1.4 l1.5 -1.4 l1.5 1.4 l1.5 -1.4 l1.5 1.4 l1.5 -1.4 l1.5 1.4 l1.5 -1.4 l1.5 1.4 l1.5 -1.4 l1.5 1.4 l1.5 -1.4 l1.5 1.4 l1.5 -1.4 l1.5 1.4 l1.5 -1.4 l1.5 1.4 l1.5 -1.4 l1.5 1.4 l1.5 -1.4 l1.5 1.4 l1.5 -1.4 l1.5 1.4 l1.5 -1.4 l1.5 1.4 l1.5 -1.4 l1.5 1.4" stroke="#e00000" stroke-width="0.7" fill="none"/></svg>
<svg style="left:312.5px;top:504px" width="8" height="8"><path d="M0.5 2.8 H7" stroke="#b8c0c0" stroke-width="0.8"/><path d="M4.5 0 V3" stroke="#606060" stroke-width="0.8"/><path d="M0.5 3.6 L2.5 5.6 L4.5 3.6 L6.5 5.6" stroke="#ff0000" stroke-width="0.9" fill="none"/></svg>
<svg style="left:383.5px;top:525px" width="8" height="8"><path d="M0.5 2.8 H7" stroke="#b8c0c0" stroke-width="0.8"/><path d="M4.5 0 V3" stroke="#606060" stroke-width="0.8"/><path d="M0.5 3.6 L2.5 5.6 L4.5 3.6 L6.5 5.6" stroke="#ff0000" stroke-width="0.9" fill="none"/></svg>
<svg style="left:312.5px;top:545px" width="8" height="8"><path d="M0.5 2.8 H7" stroke="#b8c0c0" stroke-width="0.8"/><path d="M4.5 0 V3" stroke="#606060" stroke-width="0.8"/><path d="M0.5 3.6 L2.5 5.6 L4.5 3.6 L6.5 5.6" stroke="#ff0000" stroke-width="0.9" fill="none"/></svg>
<svg style="left:357.5px;top:566px" width="8" height="8"><path d="M0.5 2.8 H7" stroke="#b8c0c0" stroke-width="0.8"/><path d="M4.5 0 V3" stroke="#606060" stroke-width="0.8"/><path d="M0.5 3.6 L2.5 5.6 L4.5 3.6 L6.5 5.6" stroke="#ff0000" stroke-width="0.9" fill="none"/></svg>
<svg style="left:328.5px;top:587px" width="8" height="8"><path d="M0.5 2.8 H7" stroke="#b8c0c0" stroke-width="0.8"/><path d="M4.5 0 V3" stroke="#606060" stroke-width="0.8"/><path d="M0.5 3.6 L2.5 5.6 L4.5 3.6 L6.5 5.6" stroke="#ff0000" stroke-width="0.9" fill="none"/></svg>
<div style="left:112px;top:602px;width:304px;height:80px;border:1px solid #404040"></div>
<div style="left:112px;top:619px;width:304px;height:1px;background:#303030"></div>
<div class="t" style="left:114.5px;top:608.00px;font-size:6.66px;line-height:6.66px;color:#202020;font-weight:bold;">Mathematik</div>
<div style="left:371px;top:604px;width:45px;height:15px;background:#e0e0e0;border:1px solid #707070"></div>
<div class="t" style="left:371px;top:609.00px;font-size:7.1px;line-height:7.1px;width:45px;text-align:center;color:#303030;">sehr gut</div>
<div style="left:112px;top:640px;width:304px;height:1px;background:#303030"></div>
<div style="left:112px;top:661px;width:304px;height:1px;background:#303030"></div>
<div style="left:216px;top:619px;width:1px;height:63px;background:#303030"></div>
<div class="t" style="left:114px;top:627.00px;font-size:6.0px;line-height:6.0px;color:#000;">Geometrie</div>
<div class="t" style="left:218px;top:623.00px;font-size:6.6px;line-height:6.6px;color:#000;">war in der Lage, beliebig komplexe Figuren im Kopf zu drehen</div>
<div class="t" style="left:114px;top:648.00px;font-size:6.0px;line-height:6.0px;color:#000;">Zahlen und Rechnen</div>
<div class="t" style="left:218px;top:644.00px;font-size:6.6px;line-height:6.6px;width:195px;text-align:justify;text-align-last:justify;white-space:nowrap;color:#000;">beherrschte schriftliche Rechenverfahren, konnte Größen in an-</div>
<div class="t" style="left:218px;top:651.00px;font-size:6.6px;line-height:6.6px;color:#000;">dere Einheiten umwandeln</div>
<div class="t" style="left:114px;top:669.00px;font-size:6.0px;line-height:6.0px;color:#000;">Sachbezogene Mathematik</div>
<div class="t" style="left:218px;top:665.00px;font-size:6.6px;line-height:6.6px;width:195px;text-align:justify;text-align-last:justify;white-space:nowrap;color:#000;">fand zu komplexen Sachaufgaben selbstständig Lösungsideen,</div>
<div class="t" style="left:218px;top:672.00px;font-size:6.6px;line-height:6.6px;color:#000;">die er gekonnt umsetzte</div>
<svg style="left:402.5px;top:621px" width="8" height="8"><path d="M0.5 2.8 H7" stroke="#b8c0c0" stroke-width="0.8"/><path d="M4.5 0 V3" stroke="#606060" stroke-width="0.8"/><path d="M0.5 3.6 L2.5 5.6 L4.5 3.6 L6.5 5.6" stroke="#ff0000" stroke-width="0.9" fill="none"/></svg>
<svg style="left:298px;top:649px" width="8" height="8"><path d="M0.5 2.8 H7" stroke="#b8c0c0" stroke-width="0.8"/><path d="M4.5 0 V3" stroke="#606060" stroke-width="0.8"/><path d="M0.5 3.6 L2.5 5.6 L4.5 3.6 L6.5 5.6" stroke="#ff0000" stroke-width="0.9" fill="none"/></svg>
<svg style="left:290.5px;top:671px" width="8" height="8"><path d="M0.5 2.8 H7" stroke="#b8c0c0" stroke-width="0.8"/><path d="M4.5 0 V3" stroke="#606060" stroke-width="0.8"/><path d="M0.5 3.6 L2.5 5.6 L4.5 3.6 L6.5 5.6" stroke="#ff0000" stroke-width="0.9" fill="none"/></svg>
<svg style="left:153px;top:713px" width="8" height="8"><path d="M0.5 2.8 H7" stroke="#b8c0c0" stroke-width="0.8"/><path d="M4.5 0 V3" stroke="#606060" stroke-width="0.8"/><path d="M0.5 3.6 L2.5 5.6 L4.5 3.6 L6.5 5.6" stroke="#ff0000" stroke-width="0.9" fill="none"/></svg>
<div class="t" style="left:161px;top:715.00px;font-size:5.3px;line-height:5.3px;color:#404040;">Religionslehre (ev.) für Schüler, die nicht am Religionsunterricht teilnehmen, Ethik</div>
<svg style="left:0;top:0" width="928" height="778"><path d="M196 719 l1.5 -1.4 l1.5 1.4 l1.5 -1.4 l1.5 1.4 l1.5 -1.4 l1.5 1.4" stroke="#e00000" stroke-width="0.7" fill="none"/></svg>
<div style="left:535px;top:197px;width:304px;height:18px;border:1px solid #606060"></div>
<div class="t" style="left:537px;top:199.00px;font-size:6.7px;line-height:6.7px;color:#181818;">Seite 2 des Jahreszeugnisses Schuljahr 2008/09</div>
<svg style="left:0;top:0" width="928" height="778"><path d="M660 204.8 l1.5 -1.4 l1.5 1.4 l1.5 -1.4 l1.5 1.4 l1.5 -1.4 l1.5 1.4 l1.5 -1.4 l1.5 1.4 l1.5 -1.4 l1.5 1.4 l1.5 -1.4 l1.5 1.4 l1.5 -1.4 l1.5 1.4" stroke="#e00000" stroke-width="0.7" fill="none"/></svg>
<div class="t" style="left:537px;top:207.00px;font-size:6.7px;line-height:6.7px;color:#181818;">von</div>
<div class="t" style="left:553.5px;top:207.00px;font-size:7.6px;line-height:7.6px;color:#181818;">K u n s t f e r t i g, Karl</div>
<div class="t" style="left:796px;top:201.00px;font-size:4.5px;line-height:4.5px;width:40px;text-align:right;color:#181818;">Zusatz 2</div>
<div style="left:535px;top:220px;width:304px;height:18px;border:1px solid #505050"></div>
<div class="t" style="left:537px;top:226.00px;font-size:6.7px;line-height:6.7px;color:#000;font-weight:bold;">Heimat- und Sachunterricht</div>
<div style="left:794px;top:222px;width:45px;height:14px;background:#e0e0e0;border:1px solid #707070"></div>
<div class="t" style="left:794px;top:226.00px;font-size:7.1px;line-height:7.1px;width:45px;text-align:center;color:#303030;">sehr gut</div>
<div style="left:535px;top:241px;width:304px;height:18px;border:1px solid #505050"></div>
<div class="t" style="left:537px;top:247.00px;font-size:6.7px;line-height:6.7px;color:#000;font-weight:bold;">Werken/Textiles Gestalten</div>
<div style="left:794px;top:243px;width:45px;height:14px;background:#e0e0e0;border:1px solid #707070"></div>
<div class="t" style="left:794px;top:247.00px;font-size:7.1px;line-height:7.1px;width:45px;text-align:center;color:#303030;">ausreichend</div>
<svg style="left:0;top:0" width="928" height="778"><path d="M537 252.5 l1.5 -1.4 l1.5 1.4 l1.5 -1.4 l1.5 1.4 l1.5 -1.4 l1.5 1.4 l1.5 -1.4 l1.5 1.4 l1.5 -1.4 l1.5 1.4 l1.5 -1.4 l1.5 1.4 l1.5 -1.4 l1.5 1.4 l1.5 -1.4 l1.5 1.4 l1.5 -1.4 l1.5 1.4 l1.5 -1.4 l1.5 1.4 l1.5 -1.4 l1.5 1.4 l1.5 -1.4 l1.5 1.4 l1.5 -1.4 l1.5 1.4 l1.5 -1.4 l1.5 1.4 l1.5 -1.4 l1.5 1.4 l1.5 -1.4 l1.5 1.4" stroke="#e00000" stroke-width="0.7" fill="none"/></svg>
<div style="left:535px;top:262px;width:304px;height:52px;border:1px solid #404040"></div>
<div style="left:535px;top:279px;width:304px;height:1px;background:#303030"></div>
<div style="left:535px;top:296px;width:304px;height:1px;background:#303030"></div>
<div class="t" style="left:537px;top:268.00px;font-size:6.7px;line-height:6.7px;color:#000;font-weight:bold;">Kunsterziehung</div>
<div class="t" style="left:537px;top:285.00px;font-size:6.7px;line-height:6.7px;color:#000;font-weight:bold;">Musikerziehung</div>
<div class="t" style="left:537px;top:302.00px;font-size:6.7px;line-height:6.7px;color:#000;font-weight:bold;">Sporterziehung</div>
<div style="left:794px;top:264px;width:45px;height:14px;background:#e0e0e0;border:1px solid #707070"></div>
<div class="t" style="left:794px;top:268.00px;font-size:7.1px;line-height:7.1px;width:45px;text-align:center;color:#303030;">ausreichend</div>
<div style="left:794px;top:281px;width:45px;height:14px;background:#e0e0e0;border:1px solid #707070"></div>
<div class="t" style="left:794px;top:285.00px;font-size:7.1px;line-height:7.1px;width:45px;text-align:center;color:#303030;">sehr gut</div>
<div style="left:794px;top:298px;width:45px;height:14px;background:#e0e0e0;border:1px solid #707070"></div>
<div class="t" style="left:794px;top:302.00px;font-size:7.1px;line-height:7.1px;width:45px;text-align:center;color:#303030;">befriedigend</div>
<div style="left:535px;top:318px;width:304px;height:28px;border:1px solid #404040"></div>
<div style="left:639px;top:318px;width:1px;height:28px;background:#404040"></div>
<div class="t" style="left:537px;top:329.00px;font-size:6.6px;line-height:6.6px;color:#000;font-weight:bold;">Fremdsprache</div>
<div class="t" style="left:641px;top:326.00px;font-size:6.5px;line-height:6.5px;width:196px;text-align:justify;text-align-last:justify;white-space:nowrap;color:#000;">wiederholte einfache Sätze und Redewendungen korrekt; beant-</div>
<div class="t" style="left:641px;top:334.00px;font-size:6.5px;line-height:6.5px;color:#000;">wortete einfache Fragen weitgehend sicher</div>
<svg style="left:770px;top:332px" width="8" height="8"><path d="M0.5 2.8 H7" stroke="#b8c0c0" stroke-width="0.8"/><path d="M4.5 0 V3" stroke="#606060" stroke-width="0.8"/><path d="M0.5 3.6 L2.5 5.6 L4.5 3.6 L6.5 5.6" stroke="#ff0000" stroke-width="0.9" fill="none"/></svg>
<div style="left:535px;top:350px;width:304px;height:139px;border:1px solid #505050"></div>
<div class="t" style="left:537px;top:354.00px;font-size:6.68px;line-height:6.68px;color:#000;font-weight:bold;">Individuelle Lernfortschritte/Förderansätze/Ergänzende Bemerkungen</div>
<svg style="left:0;top:0" width="928" height="778"><path d="M576 359 l1.5 -1.4 l1.5 1.4 l1.5 -1.4 l1.5 1.4 l1.5 -1.4 l1.5 1.4 l1.5 -1.4 l1.5 1.4 l1.5 -1.4 l1.5 1.4 l1.5 -1.4 l1.5 1.4 l1.5 -1.4 l1.5 1.4 l1.5 -1.4 l1.5 1.4 l1.5 -1.4 l1.5 1.4 l1.5 -1.4 l1.5 1.4 l1.5 -1.4 l1.5 1.4 l1.5 -1.4 l1.5 1.4 l1.5 -1.4 l1.5 1.4 l1.5 -1.4 l1.5 1.4 l1.5 -1.4 l1.5 1.4 l1.5 -1.4 l1.5 1.4 l1.5 -1.4 l1.5 1.4 l1.5 -1.4 l1.5 1.4 l1.5 -1.4 l1.5 1.4 l1.5 -1.4 l1.5 1.4 l1.5 -1.4 l1.5 1.4 l1.5 -1.4 l1.5 1.4 l1.5 -1.4 l1.5 1.4 l1.5 -1.4 l1.5 1.4 l1.5 -1.4 l1.5 1.4 l1.5 -1.4 l1.5 1.4 l1.5 -1.4 l1.5 1.4 l1.5 -1.4 l1.5 1.4 l1.5 -1.4 l1.5 1.4 l1.5 -1.4 l1.5 1.4 l1.5 -1.4 l1.5 1.4 l1.5 -1.4 l1.5 1.4 l1.5 -1.4 l1.5 1.4 l1.5 -1.4 l1.5 1.4 l1.5 -1.4 l1.5 1.4 l1.5 -1.4 l1.5 1.4 l1.5 -1.4 l1.5 1.4 l1.5 -1.4 l1.5 1.4 l1.5 -1.4 l1.5 1.4 l1.5 -1.4 l1.5 1.4 l1.5 -1.4 l1.5 1.4 l1.5 -1.4 l1.5 1.4 l1.5 -1.4 l1.5 1.4 l1.5 -1.4 l1.5 1.4" stroke="#e00000" stroke-width="0.7" fill="none"/></svg>
<svg style="left:537.4px;top:365.5px" width="8" height="8"><path d="M0.5 2.8 H7" stroke="#b8c0c0" stroke-width="0.8"/><path d="M4.5 0 V3" stroke="#606060" stroke-width="0.8"/><path d="M0.5 3.6 L2.5 5.6 L4.5 3.6 L6.5 5.6" stroke="#ff0000" stroke-width="0.9" fill="none"/></svg>
<div class="t" style="left:576.8px;top:505.00px;font-size:8px;line-height:8px;color:#181818;">Der Schüler rückt</div>
<div class="t" style="left:640px;top:506.00px;font-size:6px;line-height:6px;width:33px;text-align:center;color:#909090;">----</div>
<div style="left:640px;top:515px;width:33px;height:1px;background:#404040"></div>
<div class="t" style="left:674.6px;top:505.00px;font-size:8px;line-height:8px;color:#181818;">in die nächste Jahrgangsstufe vor.</div>
<div class="t" style="left:626px;top:525.00px;font-size:8px;line-height:8px;color:#181818;">Kleinschwabhausen, 27. Juli 2008</div>
<svg style="left:0;top:0" width="928" height="778"><path d="M626 531.5 l1.5 -1.4 l1.5 1.4 l1.5 -1.4 l1.5 1.4 l1.5 -1.4 l1.5 1.4 l1.5 -1.4 l1.5 1.4 l1.5 -1.4 l1.5 1.4 l1.5 -1.4 l1.5 1.4 l1.5 -1.4 l1.5 1.4 l1.5 -1.4 l1.5 1.4 l1.5 -1.4 l1.5 1.4 l1.5 -1.4 l1.5 1.4 l1.5 -1.4 l1.5 1.4 l1.5 -1.4 l1.5 1.4 l1.5 -1.4 l1.5 1.4 l1.5 -1.4 l1.5 1.4 l1.5 -1.4 l1.5 1.4 l1.5 -1.4 l1.5 1.4 l1.5 -1.4 l1.5 1.4 l1.5 -1.4 l1.5 1.4 l1.5 -1.4 l1.5 1.4 l1.5 -1.4 l1.5 1.4 l1.5 -1.4 l1.5 1.4 l1.5 -1.4 l1.5 1.4 l1.5 -1.4 l1.5 1.4 l1.5 -1.4 l1.5 1.4 l1.5 -1.4 l1.5 1.4" stroke="#e00000" stroke-width="0.7" fill="none"/></svg>
<div class="t" style="left:537px;top:544.00px;font-size:6.6px;line-height:6.6px;color:#000;font-weight:bold;">Schulleiterin</div>
<div class="t" style="left:716.5px;top:544.00px;font-size:6.6px;line-height:6.6px;color:#402020;font-weight:bold;">Klassleiterin</div>
<svg style="left:0;top:0" width="928" height="778"><path d="M716 548 l1.5 -1.4 l1.5 1.4 l1.5 -1.4 l1.5 1.4 l1.5 -1.4 l1.5 1.4 l1.5 -1.4 l1.5 1.4 l1.5 -1.4 l1.5 1.4 l1.5 -1.4 l1.5 1.4 l1.5 -1.4 l1.5 1.4 l1.5 -1.4 l1.5 1.4 l1.5 -1.4 l1.5 1.4 l1.5 -1.4 l1.5 1.4 l1.5 -1.4 l1.5 1.4 l1.5 -1.4 l1.5 1.4 l1.5 -1.4 l1.5 1.4" stroke="#e00000" stroke-width="0.7" fill="none"/></svg>
<div style="left:535px;top:587px;width:124px;height:1px;background:#505050"></div>
<div style="left:715px;top:587px;width:124px;height:1px;background:#505050"></div>
<div class="t" style="left:535px;top:590.00px;font-size:5.3px;line-height:5.3px;width:124px;text-align:center;color:#181818;"><span style="color:#b00000">Weichenwieder Wollerge,</span> Rektorin</div>
<svg style="left:0;top:0" width="928" height="778"><path d="M556 593.5 l1.5 -1.4 l1.5 1.4 l1.5 -1.4 l1.5 1.4 l1.5 -1.4 l1.5 1.4 l1.5 -1.4 l1.5 1.4 l1.5 -1.4 l1.5 1.4 l1.5 -1.4 l1.5 1.4 l1.5 -1.4 l1.5 1.4 l1.5 -1.4 l1.5 1.4 l1.5 -1.4 l1.5 1.4 l1.5 -1.4 l1.5 1.4 l1.5 -1.4 l1.5 1.4 l1.5 -1.4 l1.5 1.4 l1.5 -1.4 l1.5 1.4 l1.5 -1.4 l1.5 1.4 l1.5 -1.4 l1.5 1.4 l1.5 -1.4 l1.5 1.4 l1.5 -1.4 l1.5 1.4 l1.5 -1.4 l1.5 1.4 l1.5 -1.4 l1.5 1.4 l1.5 -1.4 l1.5 1.4 l1.5 -1.4 l1.5 1.4" stroke="#e00000" stroke-width="0.7" fill="none"/></svg>
<div class="t" style="left:715px;top:590.00px;font-size:5.3px;line-height:5.3px;width:124px;text-align:center;color:#181818;">Lieblich Katharina, <span style="color:#d00000">Kn</span></div>
<div class="t" style="left:535px;top:609.00px;font-size:6.75px;line-height:6.75px;width:124px;text-align:center;color:#181818;">Kenntnis genommen</div>
<div style="left:535px;top:639px;width:124px;height:1px;background:#505050"></div>
<div style="left:715px;top:639px;width:124px;height:1px;background:#505050"></div>
<div class="t" style="left:535px;top:642.00px;font-size:5.3px;line-height:5.3px;width:124px;text-align:center;color:#181818;">Ort, Datum</div>
<div class="t" style="left:715px;top:642.00px;font-size:5.3px;line-height:5.3px;width:124px;text-align:center;color:#181818;">Unterschrift des/der Erziehungsberechtigten</div>
<svg style="left:0;top:0" width="928" height="778"><path d="M753 645.5 l1.5 -1.4 l1.5 1.4 l1.5 -1.4 l1.5 1.4 l1.5 -1.4 l1.5 1.4 l1.5 -1.4 l1.5 1.4 l1.5 -1.4 l1.5 1.4 l1.5 -1.4" stroke="#e00000" stroke-width="0.7" fill="none"/></svg>
<div class="t" style="left:535px;top:684.00px;font-size:5.3px;line-height:5.3px;width:304px;text-align:center;color:#181818;">Erläuterung zur Bewertung</div>
<div class="t" style="left:535px;top:690.00px;font-size:5.3px;line-height:5.3px;width:304px;text-align:center;color:#181818;">1 = sehr gut; 2 = gut; 3 = befriedigend; 4 = ausreichend; 5 = mangelhaft; 6 = ungenügend</div>
<svg style="left:655px;top:561px" width="64" height="64" viewBox="0 0 64 64">
<circle cx="32" cy="31.7" r="27" fill="none" stroke="#000" stroke-width="1.1" stroke-dasharray="2 1.2"/>
<circle cx="32" cy="31.7" r="25" fill="none" stroke="#111" stroke-width="0.9" stroke-dasharray="1.2 1.2"/>
<defs><path id="ring" d="M32 31.7 m-21.5 0 a21.5 21.5 0 1 1 43 0 a21.5 21.5 0 1 1 -43 0"/></defs>
<text font-family="Liberation Mono" font-size="5.2" font-weight="bold" fill="#111" letter-spacing="0.3"><textPath href="#ring">GRUNDSCHULE·KLEINSCHWABHAUSEN·DIETRICH·BONHOEFFER·</textPath></text>
<path d="M32.5 46 L27 36 L16 36 L23 27.5 L23 16.4 L32.5 21.3 L42 16.4 L42 27.5 L48.8 36 L38 36 Z" fill="none" stroke="#000" stroke-width="1.1" stroke-dasharray="2 1.3"/>
</svg>
<svg style="left:0;top:0" width="928" height="778" viewBox="0 0 928 778"><path d="M678.8 424.7 L271.7 349 M291.1 343.2 L271.7 349 L285.9 363 M264.5 357.5 L264.5 407.9 M253.6 389.8 L264.5 407.9 L275.6 391.1 M271.7 419.6 L385.5 462.2 M372.6 446.7 L385.5 462.2 L364.8 466.9 M382.5 459.5 L393.3 476.5 L404.1 461 M384.1 487.8 L325 503 M338.5 488.4 L325 503 L343.4 508.4 M305.6 500 L316.2 517 L326.8 500 M305.6 521.4 L316.2 537.9 L326.9 521.4 M305.6 542.7 L316.2 558.2 L327 542.7 M305.6 562.7 L316.2 579.6 L327 562.7 M325 589.3 L386.1 608.7 M370.5 593.2 L386.1 608.7 L365.7 613.5 M384.7 613.3 L325.6 626.9 M338.2 613.3 L325.6 626.9 L344 633.6 M305.6 625.9 L316.5 642 L327.5 625.9 M305.6 646.2 L316.5 662.7 L327.5 646.2 M322.7 665.6 L810.1 234.2 M789.2 238.4 L810.1 234.2 L803.4 254.2 M805.6 224.7 L816.4 240.9 L827.6 224.7 M805.6 245.6 L816.4 261.8 L827.6 245.6 M816.4 276 L816.4 281.8 M805.6 263.1 L816.4 281.8 L827.6 263.1 M816.4 292 L816.4 298.5 M805.6 279.8 L816.4 298.5 L827.6 279.8 M807.3 308.3 L747.4 328.4 M759.9 313 L747.4 328.4 L767 333.2 M734.3 340.3 L691.2 417.4 M690.5 398.4 L691.2 417.4 L708.2 408.6" stroke="#0000ff" stroke-width="3.3" fill="none" stroke-linecap="butt" stroke-linejoin="round"/></svg>
</body></html>
